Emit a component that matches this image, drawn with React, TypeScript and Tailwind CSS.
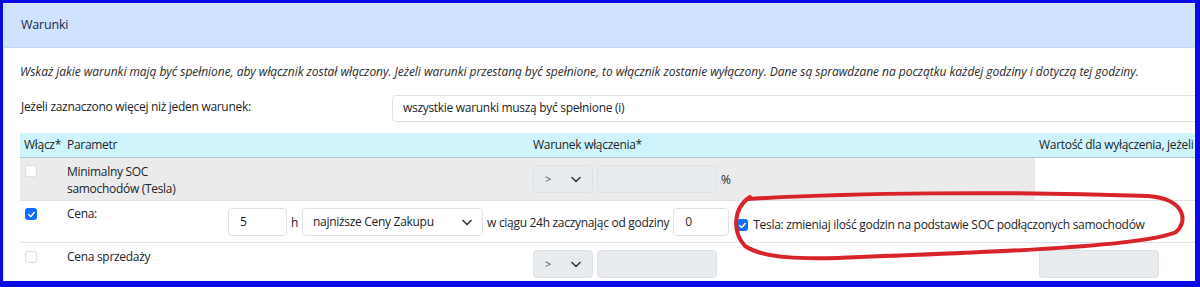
import React from "react";

const font = { fontFamily: '"Open Sans", "Noto Sans", sans-serif' };

function Chevron({ className = "" }: { className?: string }) {
  return (
    <svg width="10" height="7" viewBox="0 0 10 7" className={className}>
      <polyline points="1,1.5 5,5.5 9,1.5" fill="none" stroke="#343a40" strokeWidth="1.6" strokeLinecap="round" strokeLinejoin="round" />
    </svg>
  );
}

function Box({ checked = false, className = "" }: { checked?: boolean; className?: string }) {
  if (checked)
    return (
      <div className={`w-[12px] h-[12px] rounded-[3px] bg-[#0d6efd] flex items-center justify-center ${className}`}>
        <svg width="9" height="9" viewBox="0 0 10 10">
          <polyline points="2,5.2 4.2,7.3 8,2.8" fill="none" stroke="#fff" strokeWidth="1.7" strokeLinecap="round" strokeLinejoin="round" />
        </svg>
      </div>
    );
  return <div className={`w-[12px] h-[12px] rounded-[3px] bg-white border border-[#dcdfe3] ${className}`} />;
}

function GraySelect() {
  return (
    <div className="w-[60px] h-[28px] rounded-[4px] bg-[#e9ecef] border border-[#dee2e6] flex items-center pl-[11px] pr-[11px] justify-between text-[#495057]">
      <span className="text-[11px]">&gt;</span>
      <Chevron />
    </div>
  );
}

function GrayInput({ className = "" }: { className?: string }) {
  return <div className={`w-[120px] h-[28px] rounded-[4px] bg-[#e9ecef] border border-[#dee2e6] ${className}`} />;
}

export default function App() {
  return (
    <div className="w-[1200px] h-[287px] bg-white overflow-hidden relative text-[12px] text-[#212529] tracking-[-0.3px]" style={font}>
      <div className="absolute inset-0 border-l-[3px] border-t-[3px] border-r-[5px] border-b-[6px] border-[#0a0ae6] pointer-events-none z-20" />
      <div className="pl-[3px] pt-[3px] w-[1195px] h-[281px] overflow-hidden">
        <div className="border-l border-t border-[#dee2e6] w-[1300px] h-full">
          <div className="h-[44px] bg-[#cfe2ff] border-b border-[#c3d6f3] flex items-center pl-[17px] text-[#1c2b45] text-[12.5px] tracking-[-0.2px]">
            Warunki
          </div>
          <div className="pl-[16px]">
            <div className="pt-[15px] italic leading-[18px] text-[#2b2b2b] tracking-[-0.04px]">
              Wskaż jakie warunki mają być spełnione, aby włącznik został włączony. Jeżeli warunki przestaną być spełnione, to włącznik zostanie wyłączony. Dane są sprawdzane na początku każdej godziny i dotyczą tej godziny.
            </div>
            <div className="flex items-center mt-[13px] h-[28px]">
              <div className="w-[372px] pl-[1px] pb-[2px]">Jeżeli zaznaczono więcej niż jeden warunek:</div>
              <div className="flex-1 h-[27px] border border-[#dee2e6] rounded-[4px] flex items-center pl-[10px]">
                wszystkie warunki muszą być spełnione (i)
              </div>
            </div>
            <div className="mt-[11px]">
              {/* header */}
              <div className="flex h-[25px] bg-[#cff4fc] border-b border-[#a9c8cf] items-center">
                <div className="w-[43px] pl-[4px]">Włącz*</div>
                <div className="w-[466px] pl-[4px]">Parametr</div>
                <div className="w-[506px] pl-[4px]">Warunek włączenia*</div>
                <div className="flex-1 pl-[4px] whitespace-nowrap">Wartość dla wyłączenia, jeżeli</div>
              </div>
              {/* row 1 */}
              <div className="flex h-[43px] border-b border-[#dee2e6]">
                <div className="flex w-[1015px] bg-[#ebebeb]">
                  <div className="w-[43px] pl-[5px] pt-[7px]">
                    <Box />
                  </div>
                  <div className="w-[466px] pl-[4px] pt-[6px] leading-[16.5px]">
                    Minimalny SOC
                    <br />
                    samochodów (Tesla)
                  </div>
                  <div className="flex-1 pl-[4px] pt-[7px] flex items-start">
                    <GraySelect />
                    <GrayInput className="ml-[4px]" />
                    <span className="ml-[4px] mt-[6px]">%</span>
                  </div>
                </div>
                <div className="flex-1" />
              </div>
              {/* row 2 */}
              <div className="flex h-[42px] border-b border-[#dee2e6]">
                <div className="w-[43px] pl-[5px] pt-[7px]">
                  <Box checked />
                </div>
                <div className="w-[161px] pl-[4px] pt-[4px]">Cena:</div>
                <div className="flex-1 pl-[4px] pt-[7px] flex items-start whitespace-nowrap">
                  <div className="w-[59px] h-[28px] rounded-[4px] border border-[#dee2e6] bg-white flex items-center pl-[11px]">5</div>
                  <span className="ml-[4px] mt-[6px]">h</span>
                  <div className="ml-[4px] w-[181px] h-[28px] rounded-[4px] border border-[#dee2e6] bg-white flex items-center pl-[10px] pr-[10px] justify-between">
                    <span>najniższe Ceny Zakupu</span>
                    <Chevron />
                  </div>
                  <span className="ml-[4px] mt-[6px]">w ciągu 24h zaczynając od godziny</span>
                  <div className="ml-[4px] w-[56px] h-[28px] rounded-[4px] border border-[#dee2e6] bg-white flex items-center pl-[11px]">0</div>
                  <div className="ml-[7px] mt-[8px] flex items-center">
                    <Box checked />
                    <span className="ml-[5px]">Tesla: zmieniaj ilość godzin na podstawie SOC podłączonych samochodów</span>
                  </div>
                </div>
              </div>
              {/* row 3 */}
              <div className="flex h-[40px]">
                <div className="w-[43px] pl-[5px] pt-[8px]">
                  <Box />
                </div>
                <div className="w-[466px] pl-[4px] pt-[5px]">Cena sprzedaży</div>
                <div className="w-[506px] pl-[4px] pt-[7px] flex items-start">
                  <GraySelect />
                  <GrayInput className="ml-[4px]" />
                </div>
                <div className="flex-1 pl-[4px] pt-[7px]">
                  <GrayInput />
                </div>
              </div>
            </div>
          </div>
        </div>
      </div>
      <svg className="absolute left-0 top-0 z-10 pointer-events-none" width="1200" height="287">
        <path
          d="M 747 199 C 850 193, 1000 191, 1148 196 C 1186 199, 1188 222, 1176 232 C 1146 246, 1000 252, 860 257 C 800 260, 762 258, 745 246 C 732 232, 733 208, 750 197"
          fill="none"
          stroke="#d9232b"
          strokeWidth="4"
          strokeLinecap="round"
          strokeLinejoin="round"
        />
      </svg>
    </div>
  );
}
